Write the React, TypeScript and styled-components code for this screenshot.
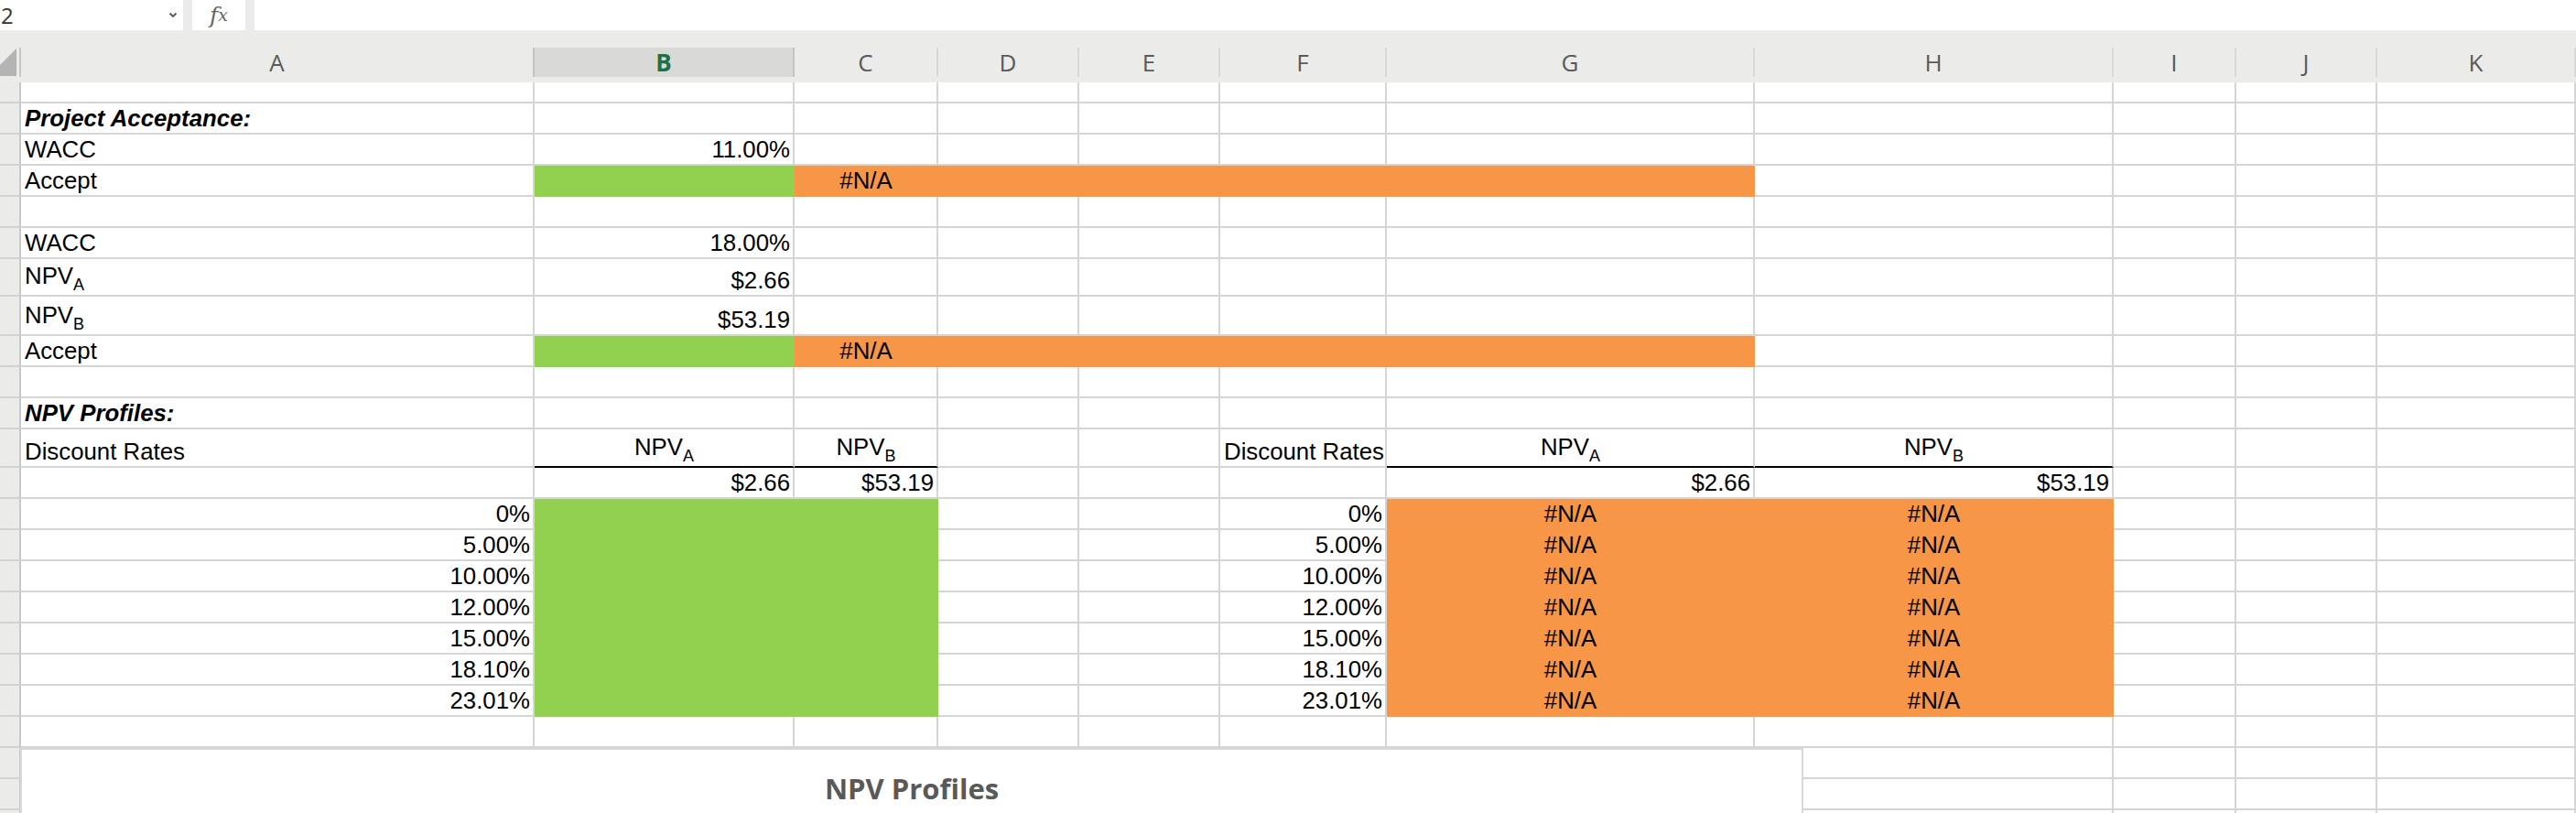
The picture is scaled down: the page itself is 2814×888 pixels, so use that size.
import React from 'react';
import styled, { createGlobalStyle } from 'styled-components';

const GRID = '#d5d5d5';
const FILLS: Record<string, string> = { green: '#92d050', orange: '#f79646' };

const COLS = [
  { key: 'A', w: 561 },
  { key: 'B', w: 284 },
  { key: 'C', w: 157 },
  { key: 'D', w: 154 },
  { key: 'E', w: 154 },
  { key: 'F', w: 182 },
  { key: 'G', w: 402 },
  { key: 'H', w: 392 },
  { key: 'I', w: 134 },
  { key: 'J', w: 154 },
  { key: 'K', w: 217 },
];
const TEMPLATE = `23px ${COLS.map((c) => `${c.w}px`).join(' ')}`;

type Spec = {
  v?: React.ReactNode;
  align?: 'left' | 'right' | 'center';
  fill?: 'green' | 'orange';
  strong?: boolean;
  rule?: boolean;
};
type RowSpec = { h: number; c: Record<string, Spec> };

const GlobalStyle = createGlobalStyle`
  html, body { margin: 0; padding: 0; background: #fff; overflow: hidden; }
`;

const Page = styled.div`
  position: relative;
  width: 2814px;
  height: 888px;
  overflow: hidden;
  background: #fff;
`;

const FormulaBar = styled.div`
  display: flex;
  gap: 10px;
  height: 34px;
  background: #ebebea;
`;

const NameBox = styled.div`
  display: flex;
  align-items: center;
  justify-content: space-between;
  width: 200px;
  height: 33px;
  padding: 0 6px 0 1px;
  box-sizing: border-box;
  background: #fff;
  font-family: "Open Sans", "Liberation Sans", sans-serif;
  font-size: 24px;
  color: #333;
`;

const FxBox = styled.div`
  display: flex;
  align-items: center;
  justify-content: center;
  width: 58px;
  height: 33px;
  box-sizing: border-box;
  background: #fff;
  font-family: "DejaVu Serif", "Liberation Serif", serif;
  font-style: italic;
  color: #666;
  font-size: 25px;
  line-height: 1;
  small { font-size: 19px; }
`;

const FormulaInput = styled.div`
  flex: 1;
  height: 33px;
  background: #fff;
`;

const HeaderBand = styled.div`
  display: grid;
  grid-template-columns: ${TEMPLATE};
  padding: 18px 0 6px;
  background: #ebebea;
`;

const Corner = styled.div`
  height: 32px;
  border-right: 2px solid #c8c8c8;
  box-sizing: border-box;
  svg { display: block; }
`;

const ColHead = styled.div<{ $active?: boolean }>`
  display: flex;
  align-items: center;
  justify-content: center;
  height: 32px;
  box-sizing: border-box;
  border-right: 2px solid ${(p) => (p.$active ? '#c4c4c4' : '#d9d9d9')};
  margin-left: ${(p) => (p.$active ? '-2px' : '0')};
  border-left: ${(p) => (p.$active ? '2px solid #c4c4c4' : 'none')};
  background: ${(p) => (p.$active ? '#d9d9d7' : 'transparent')};
  font-family: "Open Sans", "Liberation Sans", sans-serif;
  font-size: 26px;
  font-weight: ${(p) => (p.$active ? 700 : 400)};
  color: ${(p) => (p.$active ? '#1e7145' : '#5a5a5a')};
`;

const Row = styled.div<{ $h: number }>`
  display: grid;
  grid-template-columns: ${TEMPLATE};
  height: ${(p) => p.$h}px;
`;

const RowHead = styled.div`
  background: #ebebea;
  border-right: 2px solid #c8c8c8;
  border-bottom: 2px solid #d2d2d2;
  box-sizing: border-box;
`;

const Cell = styled.div<{ $align: string; $fill?: string; $strong?: boolean; $rule?: boolean }>`
  display: flex;
  align-items: flex-end;
  justify-content: ${(p) =>
    p.$align === 'right' ? 'flex-end' : p.$align === 'center' ? 'center' : 'flex-start'};
  padding: 0 3px 2px 4px;
  box-sizing: border-box;
  min-width: 0;
  background: ${(p) => (p.$fill ? FILLS[p.$fill] : '#fff')};
  border-right: 2px solid ${(p) => (p.$fill ? FILLS[p.$fill] : GRID)};
  border-bottom: 2px solid ${(p) => (p.$rule ? '#000' : p.$fill ? FILLS[p.$fill] : GRID)};
  font-family: "Liberation Sans", Arial, sans-serif;
  font-size: 25.8px;
  line-height: 1;
  color: #000;
  font-weight: ${(p) => (p.$strong ? 700 : 400)};
  font-style: ${(p) => (p.$strong ? 'italic' : 'normal')};
`;

const Value = styled.span`
  display: block;
  white-space: nowrap;
`;

const Sub = styled.sub`
  font-size: 18px;
  line-height: 1;
  vertical-align: -7px;
`;

const Chart = styled.div`
  position: absolute;
  left: 22px;
  top: 817px;
  width: 1948px;
  height: 120px;
  box-sizing: border-box;
  background: #fff;
  border: 2px solid #d9d9d9;
`;

const ChartTitle = styled.div`
  padding-top: 27px;
  text-align: center;
  font-family: "Open Sans", "Liberation Sans", sans-serif;
  font-weight: 700;
  font-size: 31px;
  line-height: 1;
  color: #595959;
`;

const Npv = ({ s }: { s: string }) => (
  <>
    NPV<Sub>{s}</Sub>
  </>
);

const acceptRow: RowSpec = {
  h: 34,
  c: {
    A: { v: 'Accept' },
    B: { fill: 'green' },
    C: { v: '#N/A', align: 'center', fill: 'orange' },
    D: { fill: 'orange' },
    E: { fill: 'orange' },
    F: { fill: 'orange' },
    G: { fill: 'orange' },
  },
};

const rates = ['0%', '5.00%', '10.00%', '12.00%', '15.00%', '18.10%', '23.01%'];

const rows: RowSpec[] = [
  { h: 23, c: {} },
  { h: 34, c: { A: { v: 'Project Acceptance:', strong: true } } },
  { h: 34, c: { A: { v: 'WACC' }, B: { v: '11.00%', align: 'right' } } },
  acceptRow,
  { h: 34, c: {} },
  { h: 34, c: { A: { v: 'WACC' }, B: { v: '18.00%', align: 'right' } } },
  { h: 41, c: { A: { v: <Npv s="A" /> }, B: { v: '$2.66', align: 'right' } } },
  { h: 43, c: { A: { v: <Npv s="B" /> }, B: { v: '$53.19', align: 'right' } } },
  acceptRow,
  { h: 34, c: {} },
  { h: 34, c: { A: { v: 'NPV Profiles:', strong: true } } },
  {
    h: 42,
    c: {
      A: { v: 'Discount Rates' },
      B: { v: <Npv s="A" />, align: 'center', rule: true },
      C: { v: <Npv s="B" />, align: 'center', rule: true },
      F: { v: 'Discount Rates' },
      G: { v: <Npv s="A" />, align: 'center', rule: true },
      H: { v: <Npv s="B" />, align: 'center', rule: true },
    },
  },
  {
    h: 34,
    c: {
      B: { v: '$2.66', align: 'right' },
      C: { v: '$53.19', align: 'right' },
      G: { v: '$2.66', align: 'right' },
      H: { v: '$53.19', align: 'right' },
    },
  },
  ...rates.map<RowSpec>((r) => ({
    h: 34,
    c: {
      A: { v: r, align: 'right' },
      B: { fill: 'green' },
      C: { fill: 'green' },
      F: { v: r, align: 'right' },
      G: { v: '#N/A', align: 'center', fill: 'orange' },
      H: { v: '#N/A', align: 'center', fill: 'orange' },
    },
  })),
  { h: 34, c: {} },
  { h: 34, c: {} },
  { h: 34, c: {} },
  { h: 34, c: {} },
];

const App = () => (
  <Page>
    <GlobalStyle />
    <FormulaBar>
      <NameBox>
        <span>2</span>
        <svg width="10" height="7" viewBox="0 0 10 7">
          <path d="M1.5 1.5 L5 5 L8.5 1.5" fill="none" stroke="#555" strokeWidth="1.8" />
        </svg>
      </NameBox>
      <FxBox>
        f<small>x</small>
      </FxBox>
      <FormulaInput />
    </FormulaBar>

    <HeaderBand>
      <Corner>
        <svg width="21" height="32" viewBox="0 0 21 32">
          <polygon points="18,1 18,31 0,31 0,19" fill="#b4b4b4" />
        </svg>
      </Corner>
      {COLS.map((c) => (
        <ColHead key={c.key} $active={c.key === 'B'}>
          {c.key}
        </ColHead>
      ))}
    </HeaderBand>

    {rows.map((row, i) => (
      <Row key={i} $h={row.h}>
        <RowHead />
        {COLS.map((col) => {
          const s = row.c[col.key] || {};
          return (
            <Cell
              key={col.key}
              $align={s.align || 'left'}
              $fill={s.fill}
              $strong={s.strong}
              $rule={s.rule}
            >
              {s.v !== undefined && <Value>{s.v}</Value>}
            </Cell>
          );
        })}
      </Row>
    ))}

    <Chart>
      <ChartTitle>NPV Profiles</ChartTitle>
    </Chart>
  </Page>
);

export default App;
